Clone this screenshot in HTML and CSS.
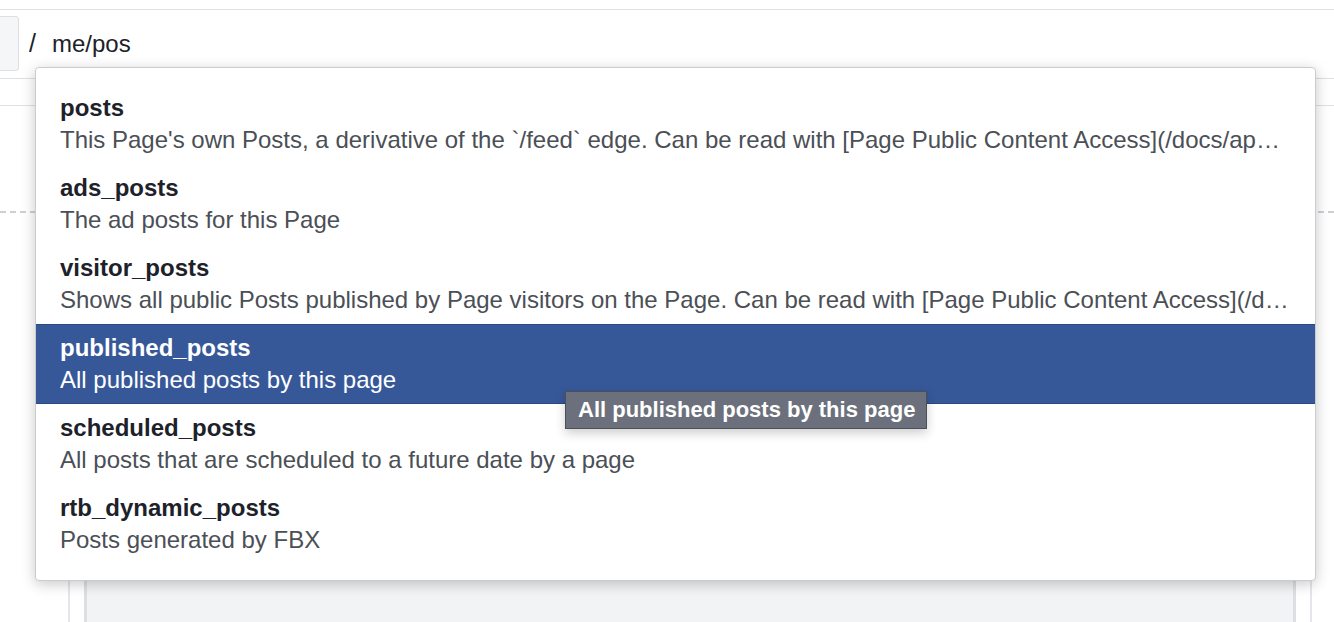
FILE: index.html
```html
<!DOCTYPE html>
<html>

<head>
    <title>Graph API Explorer - path suggestions</title>
    <meta charset="UTF-8">
    <link rel="stylesheet" href="styles.css">
</head>

<body>
    <div class="explorer">
        <div class="rule-top"></div>

        <div class="path-row">
            <div class="method-box"></div>
            <span class="slash">/</span>
            <span class="path">me/pos</span>
        </div>

        <div class="band"></div>
        <div class="dashed"></div>

        <div class="editor-wrap">
            <div class="editor"></div>
        </div>

        <!-- autocomplete for the path field -->
        <ul class="suggest">
            <li class="item">
                <div class="name">posts</div>
                <div class="desc">This Page's own Posts, a derivative of the `/feed` edge. Can be read with [Page Public Content Access](/docs/apps/review/feature#reference-PAGES_ACCESS) feature.</div>
            </li>
            <li class="item">
                <div class="name">ads_posts</div>
                <div class="desc">The ad posts for this Page</div>
            </li>
            <li class="item">
                <div class="name">visitor_posts</div>
                <div class="desc">Shows all public Posts published by Page visitors on the Page. Can be read with [Page Public Content Access](/docs/apps/review/feature#reference-PAGES_ACCESS) feature.</div>
            </li>
            <li class="item active">
                <div class="name">published_posts</div>
                <div class="desc">All published posts by this page</div>
            </li>
            <li class="item">
                <div class="name">scheduled_posts</div>
                <div class="desc">All posts that are scheduled to a future date by a page</div>
            </li>
            <li class="item">
                <div class="name">rtb_dynamic_posts</div>
                <div class="desc">Posts generated by FBX</div>
            </li>
        </ul>

        <div class="tip">All published posts by this page</div>
    </div>
</body>

</html>
```

FILE: styles.css
```css
* {
    margin: 0;
    padding: 0;
    box-sizing: border-box;
}

body {
    background: #fff;
    font-family: "Liberation Sans", Arial, Helvetica, sans-serif;
    color: #1d2129;
    overflow: hidden;
}

.explorer {
    position: relative;
    height: 622px;
    padding-top: 9px;
    overflow: hidden;
}

.rule-top {
    border-top: 1px solid #dddfe2;
}

.path-row {
    display: flex;
    align-items: center;
    height: 55px;
    margin-top: 6px;
}

.method-box {
    width: 30px;
    height: 55px;
    margin-left: -11px;
    background: #f5f6f7;
    border: 1px solid #dddfe2;
    border-radius: 3px;
}

.slash {
    font-size: 25px;
    margin-left: 10px;
    color: #1d2129;
}

.path {
    font-size: 24px;
    margin-left: 16px;
    color: #1d2129;
}

.band {
    margin-top: 7px;
    height: 28px;
    border-top: 1px solid #dddfe2;
    border-bottom: 1px solid #dddfe2;
}

.dashed {
    margin-top: 105px;
    border-top: 2px dashed #ccd0d5;
}

.editor-wrap {
    margin-top: 270px;
    margin-left: 68px;
    width: 1244px;
    height: 139px;
    padding: 0 14px;
    border-left: 2px solid #e4e6eb;
    border-right: 2px solid #e4e6eb;
}

.editor {
    height: 100%;
    background: #f2f3f5;
    border-left: 3px solid #dddfe2;
    border-right: 3px solid #dddfe2;
}

.suggest {
    position: absolute;
    top: 67px;
    left: 35px;
    width: 1281px;
    list-style: none;
    padding: 16px 0;
    background: #fff;
    border: 1px solid #c9ccd1;
    border-radius: 4px;
    box-shadow: 0 3px 14px rgba(0, 0, 0, 0.22);
}

.item {
    height: 80px;
    padding: 8px 24px;
    line-height: 32px;
    font-size: 24px;
}

.name {
    font-weight: bold;
    color: #1d2129;
}

.desc {
    color: #4b4f56;
    white-space: nowrap;
    overflow: hidden;
    text-overflow: ellipsis;
}

.item.active {
    background: #365899;
    border-top: 1px solid #29487d;
    border-bottom: 1px solid #29487d;
    padding-top: 7px;
}

.item.active .name,
.item.active .desc {
    color: #fff;
}

.tip {
    position: absolute;
    top: 391px;
    left: 565px;
    height: 38px;
    padding: 0 11px 0 12px;
    line-height: 36px;
    font-size: 22px;
    font-weight: bold;
    color: #fff;
    background: #6b707c;
    border: 1px solid #4b4f56;
    box-shadow: 0 4px 10px rgba(0, 0, 0, 0.2);
}
```
